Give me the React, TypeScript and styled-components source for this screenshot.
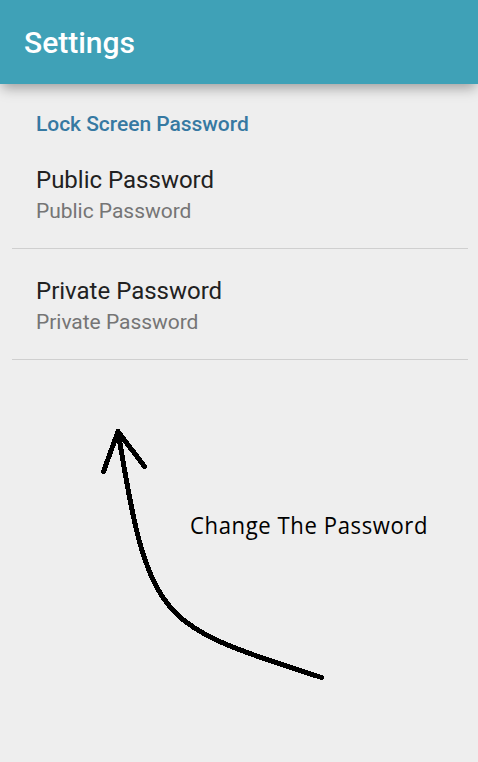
import React from "react";
import styled, { createGlobalStyle } from "styled-components";

const GlobalStyle = createGlobalStyle`
  * { box-sizing: border-box; }
  body { margin: 0; background: #eeeeee; }
`;

const Screen = styled.main`
  position: relative;
  display: flex;
  flex-direction: column;
  width: 478px;
  height: 762px;
  overflow: hidden;
  background: #eeeeee;
  font-family: Roboto, sans-serif;
`;

const AppBar = styled.header`
  display: flex;
  align-items: center;
  flex: none;
  height: 84px;
  padding: 2px 24px 0;
  background: #3fa1b7;
  box-shadow: 0 6px 12px -2px rgba(0, 0, 0, 0.34);
`;

const Title = styled.h1`
  margin: 0;
  color: #fff;
  font-size: 30px;
  font-weight: 500;
  line-height: 36px;
`;

const Preferences = styled.section`
  display: flex;
  flex-direction: column;
  padding: 26px 10px 0 12px;
`;

const Category = styled.h2`
  margin: 0;
  padding-left: 24px;
  color: #3679a2;
  font-size: 21px;
  font-weight: 500;
  letter-spacing: -0.04px;
  line-height: 28px;
`;

const Preference = styled.div`
  display: flex;
  flex-direction: column;
  height: 111px;
  padding: 26px 24px 0;
  border-bottom: 1px solid #cfcfcf;
`;

const Label = styled.span`
  color: #212121;
  font-size: 24px;
  line-height: 32px;
`;

const Summary = styled.span`
  color: #757575;
  font-size: 21px;
  letter-spacing: -0.03px;
  line-height: 30px;
`;

const Arrow = styled.svg`
  position: absolute;
  inset: 0;
  pointer-events: none;
`;

const Note = styled.p`
  position: absolute;
  left: 190px;
  top: 510px;
  margin: 0;
  color: #000;
  font-family: "Open Sans", sans-serif;
  font-size: 23px;
  letter-spacing: 0.62px;
  line-height: 30px;
  white-space: nowrap;
  transform: scaleX(0.96);
  transform-origin: left center;
`;

const entries = ["Public Password", "Private Password"];

export default function App() {
  return (
    <>
      <GlobalStyle />
      <Screen>
        <AppBar>
          <Title>Settings</Title>
        </AppBar>
        <Preferences>
          <Category>Lock Screen Password</Category>
          {entries.map((name) => (
            <Preference key={name}>
              <Label>{name}</Label>
              <Summary>{name}</Summary>
            </Preference>
          ))}
        </Preferences>
        <Arrow width="478" height="762" viewBox="0 0 478 762" fill="none" stroke="#000" strokeWidth="5" strokeLinecap="round" strokeLinejoin="round" shapeRendering="crispEdges">
          <path d="M103.500 471.500 L118 431.500 L144.500 466.500" />
          <path d="M118 431.500 C130 502 139 567 167 603 C193 639 253 655 321.500 677.500" />
        </Arrow>
        <Note>Change The Password</Note>
      </Screen>
    </>
  );
}
